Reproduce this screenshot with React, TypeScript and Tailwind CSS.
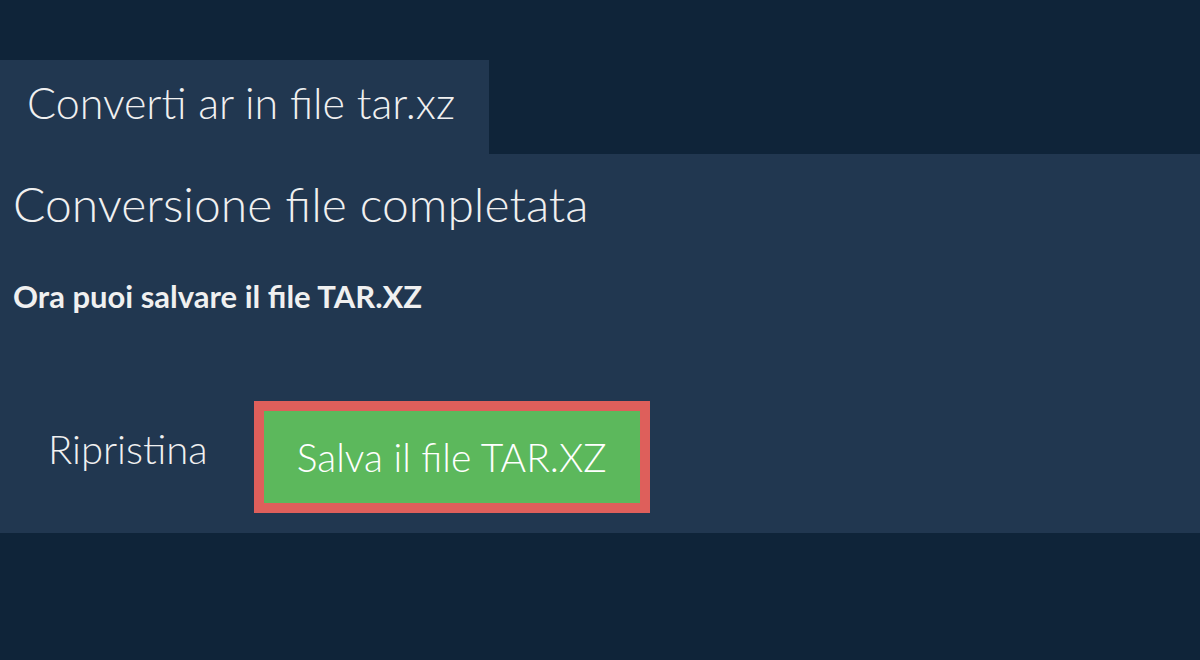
export default function App(){

return(

<div className="min-h-[660px] bg-[#0f2439] pt-[60px]" style={{fontFamily:"Lato, 'Open Sans', sans-serif"}}>

<div className="flex">
<div className="bg-[#213750] h-[94px] w-[489px] pl-[27px] pb-[10px] flex items-center">
<span className="text-[43px] font-light text-[#f0f0f0] leading-none">Converti ar in file tar.xz</span>
</div>
</div>

<div className="bg-[#213750] h-[379px] px-[13px] pt-[20px]">

<h1 className="text-[48px] font-light text-[#f0f0f0] leading-[60px]">
Conversione file completata
</h1>

<p className="mt-[42px] text-[31px] font-bold text-[#f0f0f0] leading-[40px]">
Ora puoi salvare il file TAR.XZ
</p>

<div className="mt-[85px] flex items-center">
<button className="px-[35px] mr-[11px] mb-[16px] text-[40px] font-light text-[#f0f0f0]">
Ripristina
</button>
<div className="border-[10px] border-[#de5f5b]">
<button className="bg-[#5cb85c] w-[376px] h-[92px] text-[39px] font-light text-white">
Salva il file TAR.XZ
</button>
</div>
</div>

</div>

</div>

)

}
